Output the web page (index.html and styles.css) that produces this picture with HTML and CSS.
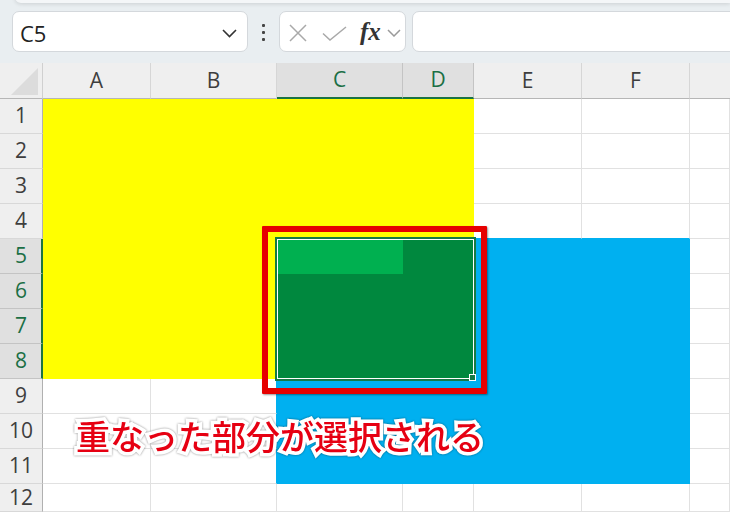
FILE: index.html
```html
<!DOCTYPE html>
<html lang="ja">
<head>
<meta charset="utf-8">
<title>Excel</title>
<link rel="stylesheet" href="styles.css">
</head>
<body>
<div class="app">
  <div class="toolbar">
    <div class="namebox">
      <span class="ref">C5</span>
      <svg class="nb-chev" width="15" height="9" viewBox="0 0 15 9"><polyline points="1,1 7.5,7.5 14,1" fill="none" stroke="#333" stroke-width="1.6"/></svg>
    </div>
    <div class="dots"><i></i><i></i><i></i></div>
    <div class="fnbox">
      <svg class="ic-x" width="18" height="18" viewBox="0 0 18 18"><path d="M1 1 L17 17 M17 1 L1 17" stroke="#a9a9a9" stroke-width="1.5" fill="none"/></svg>
      <svg class="ic-ok" width="25" height="15" viewBox="0 0 25 15"><polyline points="1,7.5 8,14 24,1" fill="none" stroke="#a9a9a9" stroke-width="1.5"/></svg>
      <span class="fx">fx</span>
      <svg class="ic-chev" width="14" height="8" viewBox="0 0 14 8"><polyline points="1,1 7,7 13,1" fill="none" stroke="#9a9a9a" stroke-width="1.5"/></svg>
    </div>
    <div class="formula"></div>
  </div>

  <div class="sheet">
    <div class="c corner"><svg width="28" height="28" viewBox="0 0 28 28"><polygon points="27,0 27,27 0,27" fill="#dcdcdc"/></svg></div>
    <div class="c ch">A</div><div class="c ch">B</div><div class="c ch sel">C</div><div class="c ch sel">D</div><div class="c ch">E</div><div class="c ch">F</div><div class="c ch last"></div>

    <div class="c rh">1</div><div class="c y"></div><div class="c y"></div><div class="c y"></div><div class="c y"></div><div class="c"></div><div class="c"></div><div class="c"></div>
    <div class="c rh">2</div><div class="c y"></div><div class="c y"></div><div class="c y"></div><div class="c y"></div><div class="c"></div><div class="c"></div><div class="c"></div>
    <div class="c rh">3</div><div class="c y"></div><div class="c y"></div><div class="c y"></div><div class="c y"></div><div class="c"></div><div class="c"></div><div class="c"></div>
    <div class="c rh">4</div><div class="c y"></div><div class="c y"></div><div class="c y"></div><div class="c y"></div><div class="c bb-blue"></div><div class="c bb-blue"></div><div class="c"></div>

    <div class="c rh sel">5</div><div class="c y"></div><div class="c y"></div><div class="c lg"></div><div class="c g"></div><div class="c b"></div><div class="c b"></div><div class="c"></div>
    <div class="c rh sel">6</div><div class="c y"></div><div class="c y"></div><div class="c g"></div><div class="c g"></div><div class="c b"></div><div class="c b"></div><div class="c"></div>
    <div class="c rh sel">7</div><div class="c y"></div><div class="c y"></div><div class="c g"></div><div class="c g"></div><div class="c b"></div><div class="c b"></div><div class="c"></div>
    <div class="c rh sel">8</div><div class="c y"></div><div class="c y"></div><div class="c g"></div><div class="c g"></div><div class="c b"></div><div class="c b"></div><div class="c"></div>

    <div class="c rh">9</div><div class="c"></div><div class="c br-blue"></div><div class="c b"></div><div class="c b"></div><div class="c b"></div><div class="c b"></div><div class="c"></div>
    <div class="c rh">10</div><div class="c"></div><div class="c br-blue"></div><div class="c b"></div><div class="c b"></div><div class="c b"></div><div class="c b"></div><div class="c"></div>
    <div class="c rh">11</div><div class="c"></div><div class="c br-blue"></div><div class="c b"></div><div class="c b"></div><div class="c b"></div><div class="c b"></div><div class="c"></div>
    <div class="c rh">12</div><div class="c"></div><div class="c"></div><div class="c"></div><div class="c"></div><div class="c"></div><div class="c"></div><div class="c"></div>
  </div>

  <div class="selection"></div>
  <div class="handle"></div>
  <div class="callout"></div>
  <div class="note">重なった部分が選択される</div>
</div>
</body>
</html>
```

FILE: styles.css
```css
* { box-sizing: border-box; }
html, body { margin: 0; padding: 0; background: #fff; }
.app {
  position: relative;
  width: 730px;
  height: 512px;
  overflow: hidden;
  font-family: "Open Sans", "Noto Sans", sans-serif;
}

/* toolbar */
.toolbar {
  position: relative;
  height: 63px;
  background: #e9eef1;
  display: flex;
  align-items: flex-start;
  padding: 11px 0 0 12px;
  overflow: hidden;
}
.toolbar::before {
  content: "";
  position: absolute;
  left: 15px;
  right: 0;
  top: -4px;
  height: 7px;
  background: #f4f6f8;
  border-bottom-left-radius: 6px;
  box-shadow: 0 1px 4px rgba(0,0,0,0.13);
}
.namebox {
  width: 236px;
  height: 41px;
  flex: none;
  background: #fff;
  border: 1px solid #d4d8dc;
  border-radius: 7px;
  display: flex;
  align-items: center;
  justify-content: space-between;
  padding: 0 10px 0 7px;
}
.ref {
  font-size: 22px;
  color: #222;
  line-height: 1;
  margin-top: 3px;
}
.nb-chev { margin-top: 3px; }
.dots {
  width: 31px;
  height: 41px;
  flex: none;
  display: flex;
  flex-direction: column;
  align-items: center;
  justify-content: center;
  gap: 4px;
  padding-top: 1px;
}
.dots i {
  display: block;
  width: 3px;
  height: 3px;
  background: #444;
  border-radius: 1px;
}
.fnbox {
  width: 127px;
  height: 41px;
  flex: none;
  background: #fff;
  border: 1px solid #d4d8dc;
  border-radius: 7px;
  display: flex;
  align-items: center;
  padding-left: 9px;
}
.ic-x { margin-top: 3px; }
.ic-ok { margin-left: 15px; margin-top: 3px; }
.fx {
  margin-left: 13px;
  font-family: "Liberation Serif", "DejaVu Serif", serif;
  font-style: italic;
  font-weight: bold;
  font-size: 25px;
  color: #333;
  line-height: 1;
}
.ic-chev { margin-left: 6px; margin-top: 3px; }
.formula {
  width: 340px;
  height: 41px;
  flex: none;
  margin-left: 6px;
  background: #fff;
  border: 1px solid #d4d8dc;
  border-radius: 7px;
}

/* sheet grid */
.sheet {
  display: grid;
  grid-template-columns: 43px 108px 126px 126px 71px 108px 108px 40px;
  grid-template-rows: 36px repeat(11, 35px) 28px;
  background: #fff;
}
.c {
  border-right: 1px solid #e1e1e1;
  border-bottom: 1px solid #e1e1e1;
}
.corner {
  background: #efefef;
  border-right: 1px solid #d0d0d0;
  border-bottom: 1px solid #b6b6b6;
  display: flex;
  align-items: flex-end;
  justify-content: flex-end;
  padding: 0 3px 2px 0;
}
.corner svg { display: block; }
.ch {
  background: #efefef;
  border-right: 1px solid #d6d6d6;
  border-bottom: 1px solid #b6b6b6;
  display: flex;
  align-items: center;
  justify-content: center;
  font-size: 21px;
  color: #3e3e3e;
  line-height: 1;
  padding-bottom: 1px;
}
.ch.sel {
  background: #e0e0e0;
  color: #1b6f45;
  border-right-color: #c4c4c4;
  border-bottom: 2px solid #1b7343;
}
.ch.last { border-right: none; }
.rh {
  background: #efefef;
  border-right: 1px solid #b0b0b0;
  border-bottom: 1px solid #d8d8d8;
  display: flex;
  align-items: center;
  justify-content: center;
  font-size: 21px;
  color: #3e3e3e;
  line-height: 1;
  padding-bottom: 1px;
}
.rh.sel {
  background: #e0e0e0;
  color: #1b6f45;
  border-right: 2px solid #1b7343;
  border-bottom-color: #c4c4c4;
  padding-left: 1px;
}
.y { background: #ffff00; border-color: #ffff00; }
.b { background: #00b0f0; border-color: #00b0f0; }
.g { background: #00883e; border-color: #00883e; }
.lg { background: #00b050; border-color: #00b050; }
.bb-blue { border-bottom-color: #00b0f0; }
.br-blue { border-right-color: #00b0f0; }

/* overlays */
.selection {
  position: absolute;
  left: 275px;
  top: 237px;
  width: 201px;
  height: 144px;
  border: 2px solid #157a45;
  box-shadow: inset 0 0 0 1px #ffffff;
}
.handle {
  position: absolute;
  left: 469px;
  top: 374px;
  width: 7px;
  height: 7px;
  background: #157a45;
  border: 1px solid #ffffff;
}
.callout {
  position: absolute;
  left: 262px;
  top: 226px;
  width: 225px;
  height: 168px;
  border: 6px solid #e60000;
  border-radius: 1px;
  box-shadow: 1px 1px 2px rgba(0,0,0,0.4);
}
.note {
  position: absolute;
  left: 76px;
  top: 419px;
  font-family: "Noto Sans CJK JP", "Noto Sans", sans-serif;
  font-weight: 500;
  font-size: 34px;
  line-height: 1;
  color: #e60012;
  white-space: nowrap;
  -webkit-text-stroke: 7px #ffffff;
  paint-order: stroke fill;
  filter: drop-shadow(0 0 1px rgba(0,0,0,0.45));
}
```
